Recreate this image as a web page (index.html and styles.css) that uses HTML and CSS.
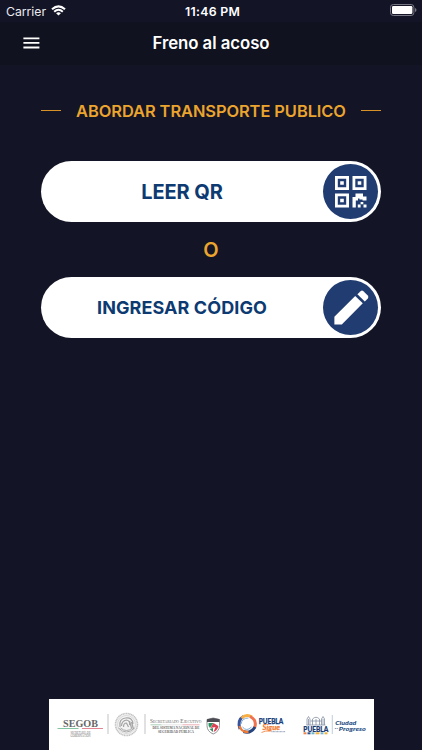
FILE: index.html
```html
<!DOCTYPE html>
<html lang="es">
<head>
<meta charset="utf-8">
<title>Freno al acoso</title>
<link rel="stylesheet" href="styles.css">
</head>
<body>
<div class="screen">
  <div class="status">
    <div class="carrier"><span>Carrier</span>
      <svg width="15" height="11" viewBox="0 0 15 11" fill="none" stroke="#fff"><path d="M1 4.2Q7.5-1.6 14 4.2" stroke-width="2.1"/><path d="M3.2 6.7Q7.5 2.8 11.8 6.7" stroke-width="2"/><path d="M7.5 10.6L5.1 8.3Q7.5 6.4 9.9 8.3Z" fill="#fff" stroke="none"/></svg>
    </div>
    <div class="time">11:46 PM</div>
    <svg class="battery" width="27" height="12" viewBox="0 0 27 12"><rect x=".5" y=".5" width="23.4" height="11" rx="2.8" fill="none" stroke="#777783"/><rect x="2" y="2" width="20.4" height="8" rx="1.3" fill="#fff"/><path d="M25 4Q26.5 4.4 26.5 6T25 8Z" fill="#777783"/></svg>
  </div>
  <header class="nav">
    <svg class="menu" width="17" height="12" viewBox="0 0 17 12" fill="#fff"><path d="M.4.4H16.4V2.200H.4zM.4 5H16.4V6.800H.4zM.4 9.600H16.4V11.400H.4z"/></svg>
    <h1 class="title">Freno al acoso</h1>
  </header>
  <main class="content">
    <div class="heading"><i class="rule"></i><h2 class="heading-text">ABORDAR TRANSPORTE PUBLICO</h2><i class="rule"></i></div>
    <button class="pill"><span class="label label-qr">LEER QR</span>
      <span class="disc"><svg width="32" height="32" viewBox="0 0 32 32" fill="#fff"><path fill-rule="evenodd" d="M0 0H14V14H0zM2.8 2.8V11.2H11.2V2.8zM5.2 5.2H8.8V8.8H5.2zM17.5 0H31.5V14H17.5zM20.3 2.8V11.2H28.7V2.8zM22.7 5.2H26.3V8.8H22.7zM0 17.5H14V31.5H0zM2.8 20.3V28.7H11.2V20.3zM5.2 22.7H8.8V26.3H5.2z"/><path d="M20.500 17.500H28V20.500H31.500V24.500H27.500V23.500H24.500V22.500H23V24.500H20.800V31.500H17.500V21H20.500zM22.800 28.500H25.600V31.500H22.800zM25.600 26H28.300V28.300H25.600zM28.500 28.500H31.500V31.500H28.500z"/></svg></span>
    </button>
    <div class="or">O</div>
    <button class="pill"><span class="label label-code">INGRESAR CÓDIGO</span>
      <span class="disc"><svg width="36" height="36" viewBox="0 0 36 36" fill="#fff"><path d="M1.400 26.800L22.200 6L29.800 13.200L8.800 34.400H1.400z"/><path d="M24.400 4.200L27.600 1.200Q29 0 30.400 1.200L34.800 5.400Q36 6.900 34.800 8.400L31.800 11.400z"/></svg></span>
    </button>
  </main>
  <footer class="sponsors">
    <svg class="logos" width="325" height="51" viewBox="48.5 699 325 51">
      <g class="serif" fill="#666">
        <text x="62.5" y="727" font-size="10.5" font-weight="bold" textLength="35" lengthAdjust="spacingAndGlyphs">SEGOB</text>
        <text x="70" y="733.6" font-size="3" textLength="20" lengthAdjust="spacingAndGlyphs">SECRETARÍA DE</text>
        <text x="70" y="737" font-size="3" textLength="20" lengthAdjust="spacingAndGlyphs">GOBERNACIÓN</text>
        <text x="149.5" y="723.2" font-size="5.8" font-variant="small-caps" textLength="51.5" lengthAdjust="spacingAndGlyphs">Secretariado Ejecutivo</text>
        <text x="152" y="728.7" font-size="3.8" font-weight="bold" textLength="47" lengthAdjust="spacingAndGlyphs">DEL SISTEMA NACIONAL DE</text>
        <text x="157.5" y="732.7" font-size="3.8" font-weight="bold" textLength="36" lengthAdjust="spacingAndGlyphs">SEGURIDAD PÚBLICA</text>
      </g>
      <path d="M57 728.5H78" stroke="#64b58a" stroke-width=".8"/><path d="M81.5 728.5H102.500" stroke="#dc6676" stroke-width=".8"/>
      <path d="M150 724.800H161" stroke="#70ad86" stroke-width=".6"/><path d="M161 724.800H182" stroke="#ccc" stroke-width=".5"/><path d="M182 724.800H199" stroke="#dd7885" stroke-width=".6"/>
      <path d="M107.500 714V734M144.500 714V734" stroke="#aaa" stroke-width=".7"/>
      <circle cx="126" cy="724.500" r="11" fill="#f3f3f3" stroke="#c2c2c2" stroke-width="1.600" stroke-dasharray="1.200 .5"/>
      <circle cx="126" cy="724.500" r="9" fill="none" stroke="#c8c8c8" stroke-width=".6"/>
      <g fill="none" stroke="#a4a4a4"><path d="M119.500 727Q118 719 125 718Q132 717 132.500 724M121 726Q121 721 126 720Q130 721 129 725M123 727Q123 723 126 723L128 727M131 722L133 729M129 721L131 728" stroke-width="1.200"/><path d="M118 728Q126 736 134 728M120 728Q126 733 132 728" stroke-width=".9"/></g>
      <path d="M206.500 719.500L212.700 718L219 719.500V725.500Q219 731.500 212.700 734Q206.500 731.500 206.500 725.500Z" fill="#fff" stroke="#777" stroke-width=".8"/>
      <path d="M206.500 719.300L212.700 718L219 719.300V722H206.500Z" fill="#4c4c55"/>
      <path d="M208 723H213L209.500 728Q207.500 726 208 723Z" fill="#289463"/><path d="M213 723L217.800 726Q217.500 730 213 732L215 727L210 728Z" fill="#dc4054"/><path d="M209 729L212.500 728V732Z" fill="#348866"/>
      <g fill="none"><path d="M239.500 729Q236.500 720 243 716.500" stroke="#38539c" stroke-width="3"/><path d="M241 718Q246 713.500 251.500 717" stroke="#f8ae43" stroke-width="2.800"/><path d="M249.500 716.500Q257 720 254 728" stroke="#ef7150" stroke-width="3"/><path d="M254.500 727Q250 734 243 731.500" stroke="#26457f" stroke-width="3"/><path d="M239 726Q241 732.500 248 732" stroke="#f07b35" stroke-width="2.400"/><path d="M240.500 724Q241.500 718 248 718M242 727Q246 732 251 727" stroke="#75a4cf" stroke-width=".9"/></g>
      <g class="sans"><text x="258.200" y="723.800" fill="#183e7b" stroke="#183e7b" stroke-width=".25" font-size="6.500" font-weight="900" textLength="24.500" lengthAdjust="spacingAndGlyphs">PUEBLA</text>
      <text x="262" y="730.300" fill="#f17b31" stroke="#f17b31" stroke-width=".25" font-size="6.600" font-weight="700" font-style="italic" textLength="17.500" lengthAdjust="spacingAndGlyphs">Sigue</text>
      <path d="M261 732.500Q264 730.500 271 731" fill="none" stroke="#f17b31" stroke-width=".8"/><path d="M271 731.700H285" stroke="#7d8dad" stroke-width=".9" stroke-dasharray="1 .4"/>
      <text x="302.800" y="731.500" fill="#173970" stroke="#173970" stroke-width=".2" font-size="7" font-weight="900" textLength="25" lengthAdjust="spacingAndGlyphs">PUEBLA</text>
      <text x="334.800" y="724.800" fill="#1f4e83" font-size="6.300" font-weight="900" font-style="italic" textLength="21" lengthAdjust="spacingAndGlyphs">Ciudad</text>
      <text x="334.200" y="729" fill="#1f4e83" font-size="2.500" font-weight="700" textLength="3.500">de</text>
      <text x="338.300" y="731.200" fill="#1f4e83" font-size="6.300" font-weight="900" font-style="italic" textLength="27" lengthAdjust="spacingAndGlyphs">Progreso</text></g>
      <g fill="none" stroke="#8790a3" stroke-width=".8"><path d="M306.500 725V719L308 716.500L309.500 719V725M321 725V719L322.500 716.500L324 719V725M310 721H321M312 725V719Q315.500 715.500 319 719V725M315.500 719V725M306 725H325M308 719V725M322.500 719V725"/></g>
      <g><path d="M303 733.300H306" stroke="#ef8344" stroke-width="2"/><path d="M307 733.300H310" stroke="#29558d" stroke-width="2"/><path d="M311 733.300H314" stroke="#67b4cf" stroke-width="2"/><path d="M315 733.300H319" stroke="#f3b340" stroke-width="2"/><path d="M320 733.300H323" stroke="#78b5d3" stroke-width="2"/><path d="M324 733.300H327" stroke="#efb63e" stroke-width="2"/></g>
      <path d="M331.800 715V734" stroke="#a9b9cc" stroke-width=".7"/>
    </svg>
  </footer>
</div>
</body>
</html>
```
FILE: styles.css
```css
* { box-sizing: border-box; }
body { margin: 0; background: #131426; font-family: Inter, "Liberation Sans", sans-serif; }
.screen { width: 422px; height: 750px; display: flex; flex-direction: column; overflow: hidden; }
.status { height: 22px; display: grid; grid-template-columns: 1fr auto 1fr; align-items: center; padding: 0 5px 0 6px; color: #fff; font-size: 12.3px; }
.carrier { display: flex; align-items: center; gap: 5px; color: #e9e9ee; letter-spacing: -.05px; }
.carrier svg { margin-top: -2px; }
.time { font-weight: 600; letter-spacing: .3px; padding-left: 2px; }
.battery { justify-self: end; margin-top: -2px; }
.nav { height: 43px; background: #11121f; display: grid; grid-template-columns: 1fr auto 1fr; align-items: center; padding: 0 23px 2px; }
.title { margin: 0; color: #fff; font-size: 16.8px; font-weight: 600; letter-spacing: -.05px; line-height: 20px; }
.content { flex: 1; padding: 35px 41px 0; display: flex; flex-direction: column; }
.heading { height: 21px; display: flex; align-items: center; justify-content: space-between; }
.rule { width: 20px; height: 1px; background: #d89124; }
.heading-text { margin: 0; color: #eba52e; font-size: 16.4px; font-weight: 600; letter-spacing: -.05px; line-height: 21px; white-space: nowrap; padding-top: 1px; }
.pill { margin-top: 40px; width: 340px; height: 61px; flex: none; border: 0; border-radius: 31px; background: #fff; padding: 0 3px 0 0; display: flex; align-items: center; font-family: inherit; color: #0e3a72; }
.label { flex: 1; text-align: center; font-weight: 700; white-space: nowrap; }
.label-qr { font-size: 20px; letter-spacing: -.1px; }
.label-code { font-size: 18px; letter-spacing: .08px; }
.disc { width: 55px; height: 55px; border-radius: 50%; background: #203c70; display: flex; align-items: center; justify-content: center; }
.or { height: 55px; line-height: 56px; text-align: center; color: #eba52e; font-size: 20px; font-weight: 600; }
.or + .pill { margin-top: 0; }
.sponsors { height: 51px; display: flex; justify-content: center; }
.logos { display: block; background: #fff; }
.serif { font-family: "Liberation Serif", serif; }
.sans { font-family: Lato, "Open Sans", sans-serif; }
```
